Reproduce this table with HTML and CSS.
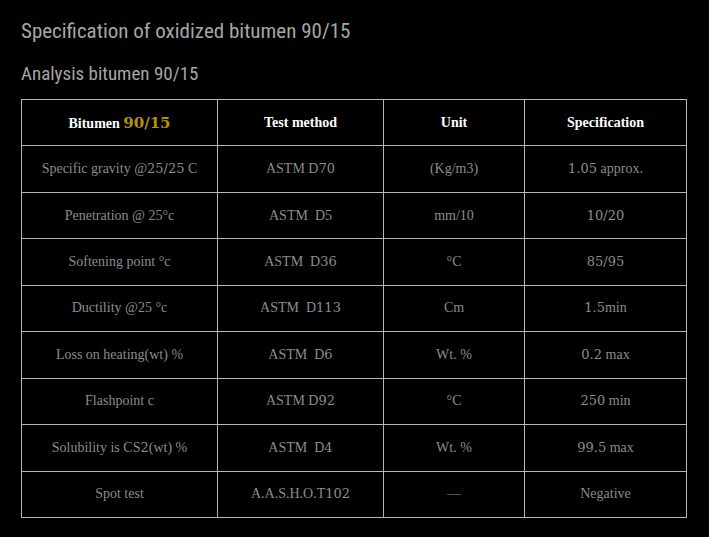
FILE: index.html
```html
<!DOCTYPE html>
<html>
<head>
<meta charset="utf-8">
<link rel="stylesheet" href="styles.css">
</head>
<body>
<div class="page">
  <h1 class="title">Specification of oxidized bitumen 90/15</h1>
  <h2 class="subtitle">Analysis bitumen 90/15</h2>
  <table class="spec">
    <colgroup>
      <col class="c1"><col class="c2"><col class="c3"><col class="c4">
    </colgroup>
    <thead>
      <tr>
        <th>Bitumen <span class="grade">90/15</span></th>
        <th>Test method</th>
        <th>Unit</th>
        <th>Specification</th>
      </tr>
    </thead>
    <tbody>
      <tr><td>Specific gravity @<span class="n">25/25</span> C</td><td>ASTM D<span class="n">70</span></td><td>(Kg/m3)</td><td><span class="n">1.05</span> approx.</td></tr>
      <tr><td>Penetration @ 25°c</td><td>ASTM&nbsp; D5</td><td>mm/10</td><td><span class="n">10/20</span></td></tr>
      <tr><td>Softening point °c</td><td>ASTM&nbsp; D<span class="n">36</span></td><td>°C</td><td><span class="n">85/95</span></td></tr>
      <tr><td>Ductility @25 °c</td><td>ASTM&nbsp; D<span class="n">113</span></td><td>Cm</td><td><span class="n">1.5</span>min</td></tr>
      <tr><td>Loss on heating(wt) %</td><td>ASTM&nbsp; D<span class="n">6</span></td><td>Wt. %</td><td><span class="n">0.2</span> max</td></tr>
      <tr><td>Flashpoint c</td><td>ASTM D<span class="n">92</span></td><td>°C</td><td><span class="n">250</span> min</td></tr>
      <tr><td>Solubility is CS<span class="n">2</span>(wt) %</td><td>ASTM&nbsp; D<span class="n">4</span></td><td>Wt. %</td><td><span class="n">99.5</span> max</td></tr>
      <tr><td>Spot test</td><td>A.A.S.H.O.T<span class="n">102</span></td><td>—</td><td>Negative</td></tr>
    </tbody>
  </table>
</div>
</body>
</html>
```
FILE: styles.css
```css
html, body {
  margin: 0;
  padding: 0;
  background: #000;
}
.page {
  padding: 14px 21px 0 21px;
}
.title {
  margin: 0;
  font-family: "Roboto Condensed", "DejaVu Sans Condensed", sans-serif;
  font-weight: normal;
  font-size: 21px;
  line-height: 34px;
  color: #a6a6a6;
}
.subtitle {
  margin: 11px 0 0 0;
  font-family: "Roboto Condensed", "DejaVu Sans Condensed", sans-serif;
  font-weight: normal;
  font-size: 19px;
  line-height: 30px;
  color: #a6a6a6;
}
.spec {
  margin-top: 10px;
  border-collapse: collapse;
  width: 665px;
  table-layout: fixed;
  font-family: "Liberation Serif", "Times New Roman", serif;
  font-size: 14px;
}
.c1 { width: 196px; }
.c2 { width: 166px; }
.c3 { width: 141px; }
.c4 { width: 162px; }
.spec th, .spec td {
  border: 1px solid #b4b4b4;
  text-align: center;
  vertical-align: middle;
  height: 45.45px;
  padding: 0;
}
.spec th {
  color: #fff;
  font-weight: bold;
}
.spec td {
  color: #8c8c8c;
}
.grade {
  font-family: "DejaVu Serif", serif;
  color: #b8900a;
  font-size: 15px;
}
.n {
  font-family: "DejaVu Serif", serif;
  font-size: 13px;
}
```
